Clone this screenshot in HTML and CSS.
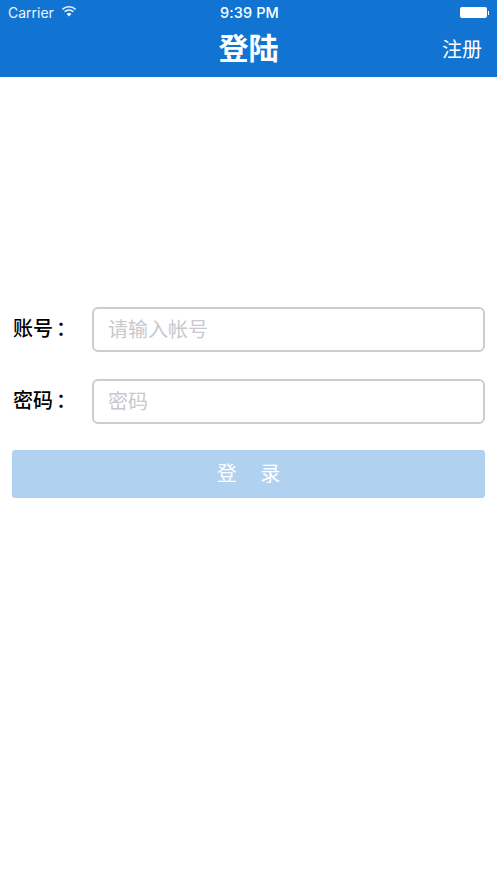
FILE: index.html
```html
<!DOCTYPE html>
<html lang="zh-CN">
<head>
<meta charset="utf-8">
<title>登陆</title>
<link rel="stylesheet" href="styles.css">
</head>
<body>
<header class="header">
  <div class="status">
    <div class="status-left">
      <span>Carrier</span>
      <svg class="wifi" width="16" height="12" viewBox="0 0 16 12"><path d="M8 11.6 5.6 8.9a3.4 3.4 0 0 1 4.8 0Z" fill="#fff"/><path d="M3.6 6.8a6.3 6.3 0 0 1 8.8 0M1.4 4.4a9.5 9.5 0 0 1 13.2 0" fill="none" stroke="#fff" stroke-width="1.6"/></svg>
    </div>
    <span class="time">9:39 PM</span>
    <div class="status-right">
      <div class="battery"></div><div class="battery-tip"></div>
    </div>
  </div>
  <div class="nav">
    <h1 class="title">登陆</h1>
    <a class="nav-action">注册</a>
  </div>
</header>
<main class="form">
  <label class="row">
    <span class="label">账号<span class="colon">：</span></span>
    <input class="input" type="text" placeholder="请输入帐号">
  </label>
  <label class="row">
    <span class="label">密码<span class="colon">：</span></span>
    <input class="input" type="password" placeholder="密码">
  </label>
  <button class="submit" type="button">登 录</button>
</main>
</body>
</html>
```
FILE: styles.css
```css
* { box-sizing: border-box; }
html, body { margin: 0; height: 100%; background: #fff; }
body { font-family: "Noto Sans CJK SC", "Liberation Sans", sans-serif; overflow: hidden; }
.header { height: 77px; background: #1174d2; color: #fff; }
.status { height: 24px; padding: 0 8px; display: grid; grid-template-columns: 1fr auto 1fr; align-items: center; font-family: Inter, "Liberation Sans", sans-serif; font-size: 14.5px; margin-bottom: 2px; }
.status-left { display: flex; align-items: center; gap: 7px; font-size: 14px; opacity: .92; }
.wifi { margin-top: -3px; }
.time { font-weight: 500; margin-left: 2px; letter-spacing: .1px; }
.status-right { display: flex; justify-content: flex-end; align-items: center; margin-top: 1px; }
.battery { width: 27px; height: 11px; background: #fff; border-radius: 2px; }
.battery-tip { width: 1.5px; height: 4px; background: #fff; margin-left: 1px; }
.nav { position: relative; height: 44px; display: flex; justify-content: center; align-items: center; }
.title { margin: -5px 0 0; font-size: 30px; font-weight: 700; line-height: 44px; }
.nav-action { position: absolute; right: 15px; top: 4px; font-size: 20px; line-height: 38px; }
.form { padding: 230px 12px 0; }
.row { display: flex; align-items: center; height: 45px; margin-bottom: 27px; }
.label { width: 80px; flex: none; padding-left: 1px; font-size: 20px; font-weight: 500; color: #000; margin-top: -4px; }
.colon { margin-left: 3px; }
.input { flex: 1; min-width: 0; height: 45px; padding: 0 14px 2px; border: 2px solid #cdcdcd; border-radius: 6px; font-family: inherit; font-size: 20px; outline: none; background: #fff; }
.input::placeholder { color: #c8c8cd; opacity: 1; }
.submit { display: block; width: 100%; height: 48px; margin-top: -1px; border: 0; border-radius: 3px; background: #b0d1ef; color: #fff; font-family: inherit; font-size: 20px; word-spacing: 19px; padding-bottom: 4px; }
```
